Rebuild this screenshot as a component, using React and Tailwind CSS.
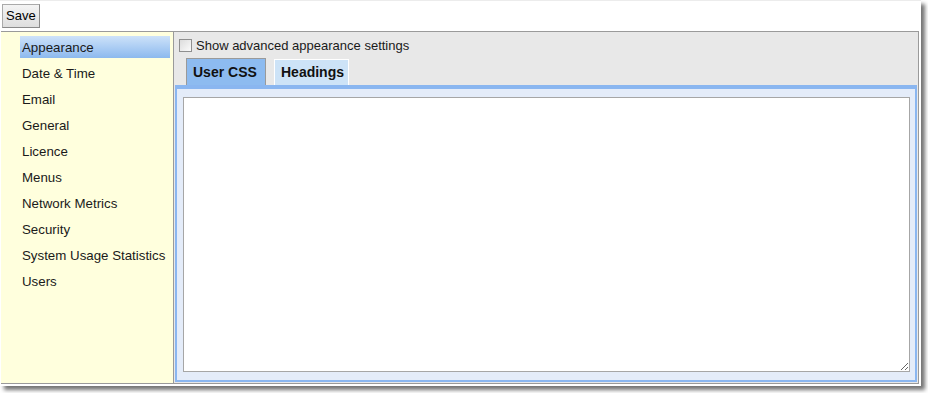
import React from 'react';

const items = [
  'Appearance',
  'Date & Time',
  'Email',
  'General',
  'Licence',
  'Menus',
  'Network Metrics',
  'Security',
  'System Usage Statistics',
  'Users',
];

const Sidebar = () => (
  <div className="w-[173px] shrink-0 bg-[#ffffdd] border-r border-[#9a9a9a] pt-1 pl-[19px] pr-[3px]">
    {items.map((item, i) => (
      <div
        key={item}
        className={`h-[22px] leading-[24px] mb-1 pl-[2px] text-[13.3px] text-[#1a1a1a] whitespace-nowrap overflow-hidden ${
          i === 0 ? 'bg-gradient-to-b from-[#cde2f9] to-[#8cb9ee]' : ''
        }`}
      >
        {item}
      </div>
    ))}
  </div>
);

const App = () => {
  return (
    <div className="w-[928px] h-[393px] bg-white" style={{ fontFamily: '"Liberation Sans", Arial, sans-serif' }}>
      <div className="w-[921px] h-[386px] bg-white border-t border-[#ececec] shadow-[4px_4px_4px_rgba(0,0,0,0.55)] flex flex-col">
        {/* top bar */}
        <div className="h-[30px] shrink-0 pl-[2px] pt-[2px]">
          <button className="h-[24px] px-[3px] text-[13px] text-black bg-gradient-to-b from-[#f4f4f4] to-[#dedede] border border-[#aaa] border-r-[#8a8a8a] border-b-[#8a8a8a]">
            Save
          </button>
        </div>

        {/* main */}
        <div className="ml-[1px] mr-[2px] h-[353px] border-t border-r border-b border-[#9a9a9a] flex">
          <Sidebar />

          <div className="flex-1 bg-[#e8e8e8] flex flex-col pl-[1px] pr-[1px] pb-[1px]">
            <label className="flex items-center h-[25px] pl-[4px] pt-[2px] text-[13px] text-[#1a1a1a]">
              <span className="w-[13px] h-[13px] border border-[#8f8f8f] bg-gradient-to-br from-[#dcdcdc] to-[#fbfbfb] mr-[4px]" />
              Show advanced appearance settings
            </label>

            <div className="flex items-end h-[28px] pl-[11px] gap-[8px]">
              <div className="h-[27px] w-[80px] border border-b-0 border-[#9a9a9a] bg-[#8dbbf0] text-[14px] font-bold text-[#111] pl-[6px] leading-[27px]">
                User CSS
              </div>
              <div className="h-[26px] w-[75px] border border-b-0 border-white bg-[#cde3f7] text-[14px] font-bold text-[#111] pl-[6px] leading-[25px]">
                Headings
              </div>
            </div>

            <div className="flex-1 border-2 border-t-4 border-[#8ab6f0] bg-[#e4ecf9] pt-[8px] pb-[8px] pl-[6px] pr-[5px] flex">
              <textarea className="flex-1 bg-white border border-[#a6a6a6] outline-none resize-y" />
            </div>
          </div>
        </div>
      </div>
    </div>
  );
};

export default App;
